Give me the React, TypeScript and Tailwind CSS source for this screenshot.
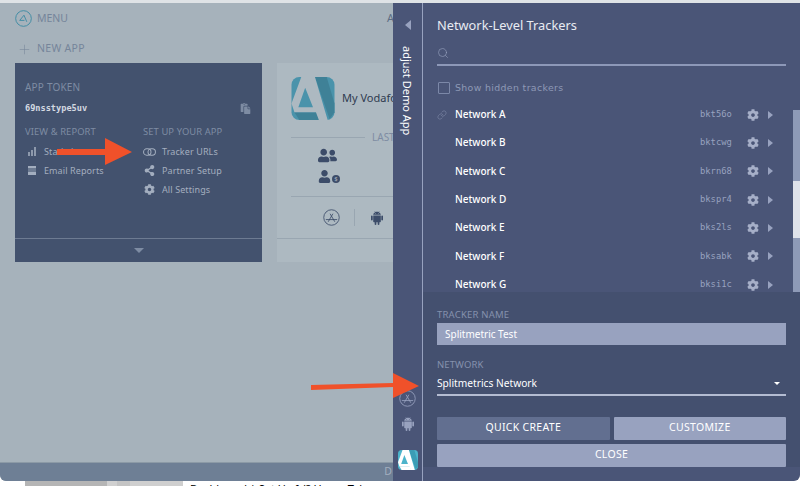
import { Link, Plus, Search } from "lucide-react";
import { AiFillAndroid } from "react-icons/ai";
import { FaCog, FaPaste, FaShareAlt, FaUser, FaUserFriends } from "react-icons/fa";

const networks = [
  { name: "Network A", code: "bkt56o" },
  { name: "Network B", code: "bktcwg" },
  { name: "Network C", code: "bkrn68" },
  { name: "Network D", code: "bkspr4" },
  { name: "Network E", code: "bks2ls" },
  { name: "Network F", code: "bksabk" },
  { name: "Network G", code: "bksi1c" },
];

function AppStoreIcon({ className }: { className?: string }) {
  return (
    <svg viewBox="0 0 18 18" className={className} fill="none" stroke="currentColor" strokeWidth="0.9">
      <circle cx="9" cy="9" r="8.2" />
      <path d="M5.5 13.5L10.5 5M12.5 13.5L7.5 5M3 11.2H15" />
    </svg>
  );
}

function Logo({ className, bg, fold, letter, foot }: { className?: string; bg: string; fold: string; letter: string; foot?: boolean }) {
  return (
    <svg viewBox="0 0 44 44" className={className}>
      <rect width="44" height="44" rx="8" fill={bg} />
      <path d="M24 0H36L44 27V36L39 43z" fill={fold} />
      <path d="M3 36H26L29 44H8z" fill={foot ? letter : fold} />
      <path fillRule="evenodd" d="M10 0H24L37 44H28L25 36H3L0 27zM14 11L7 31H22z" fill={letter} />
    </svg>
  );
}

function MenuLink({ icon, label }: { icon: React.ReactNode; label: string }) {
  return (
    <div className="flex h-[19px] items-center gap-[6px] text-[9px] tracking-[0.1px] text-[#a3aebf]">
      <span className="flex w-[13px] justify-center">{icon}</span>
      {label}
    </div>
  );
}

export default function App() {
  return (
    <div className="flex h-[486px] w-[800px] flex-col overflow-hidden bg-white font-['Noto_Sans',sans-serif]">
      <div className="h-[3px] shrink-0 bg-[#dfe3e6]" />
      <div className="relative flex h-[478px] shrink-0">
        {/* dimmed dashboard behind the drawer */}
        <div className="flex w-[393px] shrink-0 flex-col overflow-hidden rounded-bl-md bg-[#a6b2bb]">
          <div className="flex h-[30px] items-center pl-[15px] pt-[1px]">
            <svg viewBox="0 0 18 18" className="h-[17px] w-[17px] text-[#3f8ba4]" fill="none" stroke="currentColor" strokeWidth="1">
              <circle cx="9" cy="9" r="8.3" />
              <path d="M5 11L9.5 5.5L12.5 12.5M5 11H10" />
            </svg>
            <span className="ml-[5px] text-[10.5px] text-[#75859a]">MENU</span>
            <span className="ml-auto mr-[-1px] text-[11px] text-[#5d6d84]">A</span>
          </div>
          <div className="flex h-[30px] items-center pl-[17px] pt-[2px] text-[10.5px] tracking-[0.3px] text-[#75859a]">
            <Plus size={15} strokeWidth={0.9} className="mr-[5px]" />
            NEW APP
          </div>
          <div className="flex h-[199px] gap-[15px] pl-[15px]">
            <div className="flex w-[247px] flex-col bg-[#43526e]">
              <div className="h-[175px] px-[10px] pt-[17px]">
                <div className="text-[10px] tracking-[0.2px] text-[#7e8ca3]">APP TOKEN</div>
                <div className="mt-[6px] flex h-[14px] items-center justify-between pr-[1px]">
                  <span className="font-['DejaVu_Sans_Mono',monospace] text-[8.6px] font-bold text-[#d3d9e1]">69nsstype5uv</span>
                  <FaPaste size={11} className="text-[#7e8ca3]" />
                </div>
                <div className="mt-[10px] grid grid-cols-[118px_1fr]">
                  <div>
                    <div className="h-[15px] text-[9.4px] tracking-[0.1px] text-[#7e8ca3]">VIEW &amp; REPORT</div>
                    <div className="mt-[2px]">
                      <MenuLink
                        label="Statistics"
                        icon={
                          <span className="flex h-[9px] items-end gap-[1px]">
                            <i className="h-[4px] w-[2px] bg-[#8d99ac]" />
                            <i className="h-[6px] w-[2px] bg-[#8d99ac]" />
                            <i className="h-[9px] w-[2px] bg-[#8d99ac]" />
                          </span>
                        }
                      />
                      <MenuLink label="Email Reports" icon={<span className="block h-[9px] w-[8px] border-b-[3px] border-t-[2px] border-[#a3aebf] bg-[#6d7b92]" />} />
                    </div>
                  </div>
                  <div>
                    <div className="h-[15px] text-[9.4px] tracking-[0.1px] text-[#7e8ca3]">SET UP YOUR APP</div>
                    <div className="mt-[2px]">
                      <MenuLink
                        label="Tracker URLs"
                        icon={
                          <svg viewBox="0 0 14 8" className="h-[8px] w-[14px] text-[#a3aebf]" fill="none" stroke="currentColor" strokeWidth="1.1">
                            <rect x="0.6" y="0.6" width="8" height="6.8" rx="3.4" />
                            <rect x="5.4" y="0.6" width="8" height="6.8" rx="3.4" />
                          </svg>
                        }
                      />
                      <MenuLink label="Partner Setup" icon={<FaShareAlt size={11} className="text-[#a3aebf]" />} />
                      <MenuLink label="All Settings" icon={<FaCog size={11} className="text-[#a3aebf]" />} />
                    </div>
                  </div>
                </div>
              </div>
              <div className="flex flex-1 items-center justify-center border-t border-[#6d7b92]">
                <div className="h-0 w-0 border-x-[5px] border-t-[5px] border-x-transparent border-t-[#7e8ca3]" />
              </div>
            </div>
            <div className="flex min-w-0 flex-1 flex-col overflow-hidden bg-[#adb9c1]">
              <div className="flex h-[175px] flex-col pl-[14px] pt-[14px]">
                <div className="flex items-center gap-[7px]">
                  <Logo className="h-[43px] w-[44px] shrink-0" bg="#4a93ab" fold="#3f8197" letter="#adb9c1" />
                  <span className="whitespace-nowrap text-[11px] text-[#2f3b50]">My Vodafone</span>
                </div>
                <div className="mt-[10px] flex items-center gap-[7px]">
                  <div className="h-px w-[74px] shrink-0 bg-[#99a6b1]" />
                  <span className="text-[10px] text-[#7e8ca3]">LAST</span>
                </div>
                <div className="ml-[27px] mt-[1px] flex flex-col gap-[5px] text-[#3c4c69]">
                  <FaUserFriends size={19} />
                  <div className="flex items-end">
                    <FaUser size={13} />
                    <span className="ml-[1px] flex h-[8px] w-[8px] items-center justify-center rounded-full bg-[#3c4c69] text-[6px] leading-none text-[#adb9c1]">$</span>
                  </div>
                </div>
                <div className="mt-[13px] h-px bg-[#99a6b1]" />
                <div className="flex flex-1 items-center pl-[32px] text-[#3c4c69]">
                  <AppStoreIcon className="h-[17px] w-[17px]" />
                  <div className="mx-[14px] h-[17px] w-px bg-[#99a6b1]" />
                  <AiFillAndroid size={16} />
                </div>
              </div>
              <div className="flex-1 border-t border-[#99a6b1]" />
            </div>
          </div>
          <div className="mt-auto flex h-[19px] items-center justify-end border-t border-[#8c9aa6] bg-[#6e7f95] pr-[1px] text-[10.5px] text-[#a3aebf]">D</div>
        </div>

        {/* collapsed app rail */}
        <div className="flex w-[29px] shrink-0 flex-col items-center bg-[#4a5577] pb-[11px] pt-[17px]">
          <div className="h-0 w-0 border-y-[5px] border-r-[6px] border-y-transparent border-r-[#98a2bf]" />
          <span className="mt-[16px] text-[11px] leading-none text-white [writing-mode:vertical-rl]">adjust Demo App</span>
          <AppStoreIcon className="mt-auto h-[17px] w-[17px] text-[#98a2bf]" />
          <AiFillAndroid size={16} className="mt-[9px] text-[#98a2bf]" />
          <Logo className="mt-[18px] h-[20px] w-[20px]" bg="#4cb4cb" fold="#3b9db5" letter="#ffffff" foot />
        </div>
        <div className="w-px shrink-0 bg-[#98a2bf]" />

        {/* tracker drawer */}
        <div className="flex min-w-0 flex-1 flex-col rounded-br-md bg-[#4a5577]">
          <div className="relative h-[289px] shrink-0 overflow-hidden">
            <div className="px-[14px]">
              <h1 className="pt-[13px] text-[12.8px] leading-[18px] text-[#e8ebf2]">Network-Level Trackers</h1>
              <div className="mt-[8px] flex h-[24px] items-center border-b-2 border-[#8d98b8]">
                <Search size={12} strokeWidth={1.2} className="text-[#98a2bf]" />
              </div>
              <div className="mt-[15px] flex h-[14px] items-center pl-[1px]">
                <div className="h-[12px] w-[12px] rounded-[1px] border border-[#7c88a8]" />
                <span className="ml-[5px] font-['DejaVu_Sans',sans-serif] text-[9.4px] tracking-[0.35px] text-[#8e99b6]">Show hidden trackers</span>
              </div>
            </div>
            <div className="mt-[5.5px] pl-[14px] pr-[17px]">
              {networks.map((n, i) => (
                <div key={n.code} className="flex h-[28.33px] items-center">
                  <span className="flex w-[18px]">
                    {i === 0 && <Link size={10} strokeWidth={1} className="text-[#98a2bf]" />}
                  </span>
                  <span className="text-[10px] font-medium text-white">{n.name}</span>
                  <span className="ml-auto w-[45px] font-['DejaVu_Sans_Mono',monospace] text-[8.8px] text-[#98a2bf]">{n.code}</span>
                  <FaCog size={12} className="ml-[2px] text-[#a6afc8]" />
                  <div className="ml-[9px] mr-[10px] h-0 w-0 border-y-[4px] border-l-[5px] border-y-transparent border-l-[#98a2bf]" />
                </div>
              ))}
            </div>
            {/* scrollbar */}
            <div className="absolute bottom-0 right-0 top-[107px] w-[7px] bg-[#8e9ab7]">
              <div className="mt-[71px] h-[57px] bg-[#dfe2ea]" />
            </div>
          </div>
          <div className="flex h-[175px] shrink-0 flex-col bg-[#44506f] px-[14px] pt-[16px]">
            <label className="text-[9.5px] tracking-[0.2px] text-[#8590ad]">TRACKER NAME</label>
            <div className="mt-[1px] flex h-[22px] items-center bg-[#98a2bf] px-[8px] text-[10px] text-white">Splitmetric Test</div>
            <label className="mt-[13px] text-[9.5px] tracking-[0.1px] text-[#8590ad]">NETWORK</label>
            <div className="flex h-[23px] items-center justify-between border-b-2 border-[#b4bcd2] pr-[6px] pt-[1px] text-[10.2px] text-white">
              Splitmetrics Network
              <div className="h-0 w-0 border-x-[3px] border-t-[3px] border-x-transparent border-t-white" />
            </div>
            <div className="mt-[21px] grid grid-cols-2 gap-[4px] text-[10.5px] text-white">
              <button className="h-[23px] rounded-[1px] bg-[#626f90] tracking-[0.3px]">QUICK CREATE</button>
              <button className="h-[23px] rounded-[1px] bg-[#98a2bf] tracking-[0.3px]">CUSTOMIZE</button>
              <button className="col-span-2 h-[23px] rounded-[1px] bg-[#98a2bf] tracking-[0.3px]">CLOSE</button>
            </div>
          </div>
        </div>

        {/* annotation arrows */}
        <svg viewBox="0 0 75 27" className="pointer-events-none absolute left-[57px] top-[135px] h-[27px] w-[75px]">
          <path d="M0 11H48V0L75 14L48 27V17H0z" fill="#f0512a" />
        </svg>
        <svg viewBox="0 0 108 25" className="pointer-events-none absolute left-[311px] top-[370px] h-[25px] w-[108px]">
          <path d="M0 12L82 10V0L108 13L82 25V14L0 17z" fill="#f0512a" />
        </svg>
      </div>

      {/* browser chrome peeking out under the window */}
      <div className="flex h-[5px] shrink-0 overflow-hidden bg-white pl-[25px]">
        <div className="h-full w-[82px] bg-[#b5b5b5]" />
        <div className="h-full w-[10px] bg-[#d0d0d0]" />
        <div className="h-full w-[13px] bg-[#c4c4c4]" />
        <div className="h-full w-[53px] bg-[#cfcfcf]" />
        <span className="ml-[7px] whitespace-nowrap pt-[2px] text-[11px] leading-[11px] text-black">Dashboard | Set Up Id? Home Tab</span>
      </div>
    </div>
  );
}
